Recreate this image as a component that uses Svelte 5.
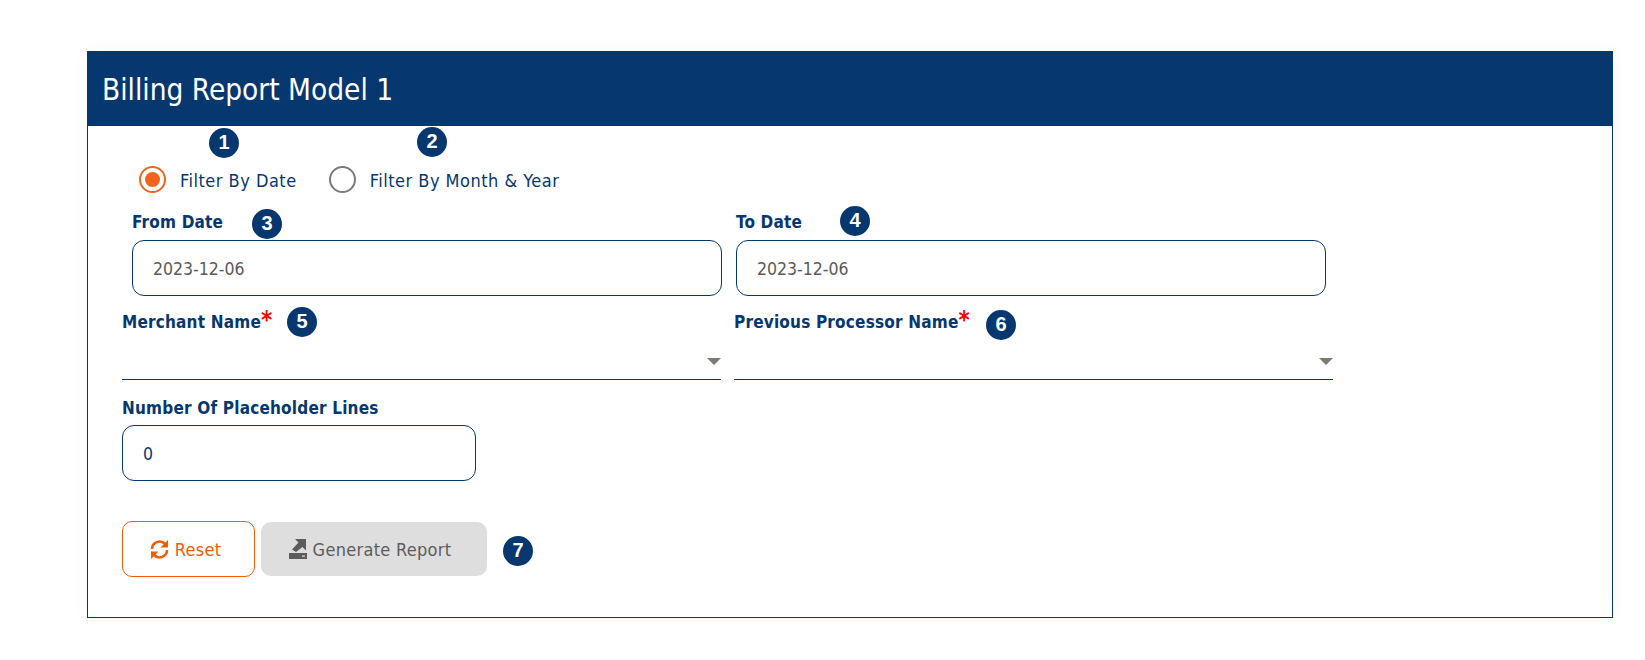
<script lang="ts">
	const badges = [
		{ n: 1, x: 121, y: 76 },
		{ n: 2, x: 329, y: 75 },
		{ n: 3, x: 164, y: 157 },
		{ n: 4, x: 752, y: 154 },
		{ n: 5, x: 199, y: 255 },
		{ n: 6, x: 898, y: 258 },
		{ n: 7, x: 415, y: 484 },
	];
</script>

<div class="page">
	<section class="card">
		<h1>Billing Report Model 1</h1>

		<div class="body">
			<div class="radios">
				<label class="radio">
					<span class="dot on"></span>
					<span class="text">Filter By Date</span>
				</label>
				<label class="radio">
					<span class="dot"></span>
					<span class="text">Filter By Month &amp; Year</span>
				</label>
			</div>

			<div class="dates">
				<div class="field">
					<span class="label">From Date</span>
					<div class="input date">2023-12-06</div>
				</div>
				<div class="field">
					<span class="label">To Date</span>
					<div class="input date">2023-12-06</div>
				</div>
			</div>

			<div class="selects">
				<div class="select">
					<span class="label">Merchant Name<b>*</b></span>
					<div class="line"><i></i></div>
				</div>
				<div class="select">
					<span class="label">Previous Processor Name<b>*</b></span>
					<div class="line"><i></i></div>
				</div>
			</div>

			<div class="count">
				<span class="label">Number Of Placeholder Lines</span>
				<div class="input">0</div>
			</div>

			<div class="actions">
				<button class="reset">
					<svg width="19" height="21" viewBox="0 0 19 21" fill="none" stroke="currentColor" stroke-width="2.6">
						<path d="M2 10a7.500 7.500 0 0 1 13-5" />
						<path d="M18 1v7.500h-7.500z" fill="currentColor" stroke="none" />
						<path d="M17 11a7.500 7.500 0 0 1-13 5" />
						<path d="M1 20v-7.500h7.500z" fill="currentColor" stroke="none" />
					</svg>
					Reset
				</button>
				<button class="generate">
					<svg width="18" height="20" viewBox="0 0 18 20" fill="currentColor">
						<path d="M0 14h18v6H0zM13 16.500v1.200h3v-1.200z" fill-rule="evenodd" />
						<path d="M6 0h11v11.500l-3.500-3.500L7 13 3 10.500 9.500 3.500z" />
					</svg>
					Generate Report
				</button>
			</div>
		</div>

		{#each badges as b (b.n)}
			<span class="badge" style="left: {b.x}px; top: {b.y}px">{b.n}</span>
		{/each}
	</section>
</div>

<style>
	:global(body) {
		margin: 0;
		background: #fff;
	}

	.page {
		padding: 51px 32px 0 87px;
		font-family: 'DejaVu Sans', sans-serif;
		font-stretch: condensed;
		color: #06376f;
	}

	.card {
		position: relative;
		height: 567px;
		box-sizing: border-box;
		border: 1px solid #06376f;
		box-shadow: 0 0 20px rgba(0, 0, 0, 0.03);
	}

	h1 {
		margin: -1px -1px 0;
		height: 75px;
		padding-left: 15px;
		background: #06376f;
		color: #fff;
		font-size: 29.5px;
		font-weight: 400;
		line-height: 78px;
	}

	.body {
		padding: 0 0 0 34px;
	}

	.radios {
		display: flex;
		gap: 32px;
		padding: 40px 0 0 17px;
		height: 27px;
	}

	.radio {
		display: flex;
		align-items: center;
		gap: 14px;
		font-size: 18px;
		letter-spacing: 0.5px;
	}

	.text {
		padding-top: 2px;
	}

	.dot {
		box-sizing: border-box;
		width: 27px;
		height: 27px;
		border: 2px solid #7a7a7a;
		border-radius: 50%;
		display: flex;
		align-items: center;
		justify-content: center;
	}

	.dot.on {
		border-color: #f26419;
	}

	.dot.on::after {
		content: '';
		width: 15px;
		height: 15px;
		border-radius: 50%;
		background: #f26419;
	}

	.label {
		font-size: 17px;
		font-weight: 700;
		letter-spacing: 0.2px;
		line-height: 22px;
		display: block;
	}

	.label b {
		color: #f00;
		font-size: 24px;
		font-weight: 700;
		line-height: 0;
	}

	.dates {
		display: grid;
		grid-template-columns: 590px 590px;
		column-gap: 14px;
		padding: 18px 0 0 10px;
	}

	.field .label {
		margin-bottom: 7px;
	}

	.input {
		box-sizing: border-box;
		height: 56px;
		border: 1px solid #06376f;
		border-radius: 12px;
		padding-left: 20px;
		font-size: 17.5px;
		line-height: 56px;
	}

	.input.date {
		color: #5b5a55;
		line-height: 57px;
	}

	.selects {
		display: grid;
		grid-template-columns: 599px 599px;
		column-gap: 13px;
		padding-top: 15px;
	}

	.line {
		position: relative;
		height: 46px;
		border-bottom: 1px solid #06376f;
	}

	.line i {
		position: absolute;
		right: 0;
		top: 25px;
		border-style: solid;
		border-width: 7px 7px 0;
		border-color: #7d7a73 transparent transparent;
	}

	.count {
		width: 354px;
		padding-top: 17px;
	}

	.count .label {
		margin-bottom: 6px;
	}

	.actions {
		display: flex;
		gap: 6px;
		align-items: center;
		padding-top: 40px;
	}

	button {
		display: flex;
		align-items: center;
		justify-content: center;
		gap: 6px;
		font: inherit;
		font-size: 18px;
		letter-spacing: 0.3px;
		box-sizing: border-box;
		border-radius: 10px;
		padding: 0;
	}

	.reset {
		width: 133px;
		height: 56px;
		padding-right: 6px;
		background: #fff;
		border: 1px solid #f25c05;
		color: #f25c05;
	}

	.generate {
		width: 226px;
		height: 54px;
		padding-right: 8px;
		background: #dedede;
		border: 0;
		color: #5c5c5c;
	}

	.badge {
		position: absolute;
		width: 30px;
		height: 30px;
		border-radius: 50%;
		background: #06376f;
		color: #fff;
		font: 700 20px/29px 'Liberation Sans', sans-serif;
		text-align: center;
	}
</style>
